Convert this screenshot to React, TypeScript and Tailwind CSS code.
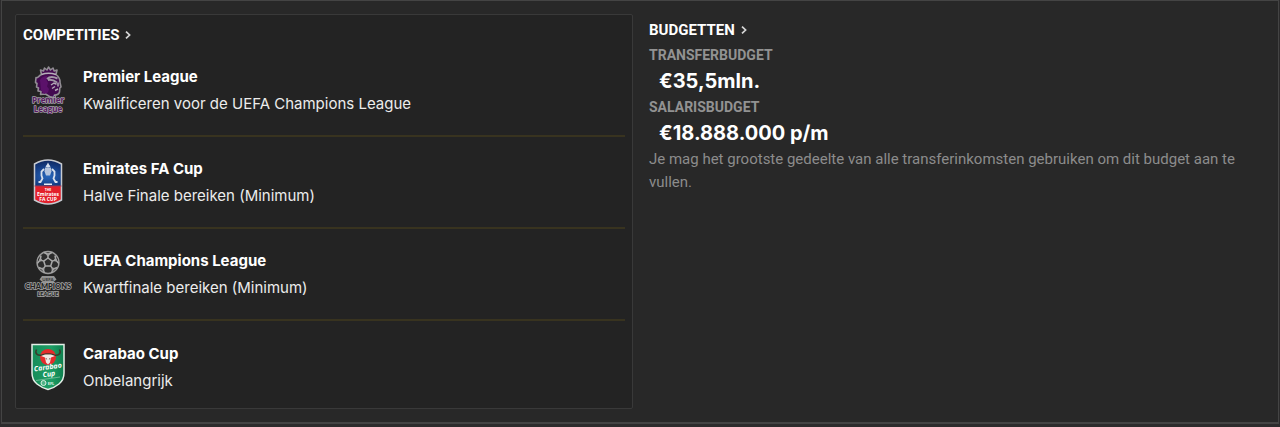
import type { ReactNode } from 'react';

function Chevron() {
  return (
    <svg className="h-2 w-1.5" viewBox="0 0 6 8" fill="none" stroke="#d6d6d6" strokeWidth="1.7" aria-hidden="true">
      <path d="M1 0.6 4.6 4 1 7.4" />
    </svg>
  );
}

function PremierLeagueLogo() {
  return (
    <svg className="size-12" viewBox="0 0 48 48" aria-hidden="true">
      <path
        fill="#430a50"
        stroke="#918d93"
        strokeWidth="1.600"
        strokeLinejoin="round"
        d="M17.500 8.500 16.500 4l3 1 1-3 2.500 2L24.500 1l2 3L29 2l1.200 3L33 4l-1 4.500c3 2.500 4.300 5 4 8l1 4.500-1.200 1-.3 4c-.5 2.500-2.500 3-5 3l1 3-6-1.500-4-2.500-5 .5.500-3-3-.5.500-3-2-1 .5-3.500-1.500-1 .5-5C13.500 12.500 14.500 10 17.500 8.500Z"
      />
      <path fill="#5b116a" d="M16 14c2-3 4-4 7-4l-.5 4 1.500 3-1 3.500 2 2.500-1 3.500-4 1.500-3-4Z" />
      <path d="M17.500 8.500c4-1.500 10-1.500 14.500 0" stroke="#b7afba" strokeWidth="1.500" fill="none" />
      <path d="M23 13c2-2 6-2.500 10.500-.5M24 14c3-.5 6 .3 9 2.500" stroke="#a197a6" strokeWidth="2" fill="none" />
      <path d="m27 19 3-2 2.500 1.200M34 16.500v4M28 22.500l3-2M31 24.500l3-1.500" stroke="#b3a9b7" strokeWidth="1.500" fill="none" />
      <g
        fontFamily="Open Sans, sans-serif"
        fontSize="8"
        fontWeight="700"
        textAnchor="middle"
        fill="#561b61"
        stroke="#aaa4ac"
        strokeWidth="1.400"
        paintOrder="stroke"
        strokeLinejoin="round"
      >
        <text x="24" y="37">Premier</text>
        <text x="24" y="45.500">League</text>
      </g>
    </svg>
  );
}

function FaCupLogo() {
  return (
    <svg className="size-12" viewBox="0 0 48 48" aria-hidden="true">
      <defs>
        <radialGradient id="fa-blue" cx="50%" cy="65%" r="70%">
          <stop offset="0" stopColor="#2868bd" />
          <stop offset="0.5" stopColor="#153d84" />
          <stop offset="1" stopColor="#0b1c4a" />
        </radialGradient>
        <clipPath id="fa-shape">
          <path d="M10.500 6Q24-2 37.500 6v36Q24 50 10.500 42Z" />
        </clipPath>
      </defs>
      <g clipPath="url(#fa-shape)">
        <rect width="48" height="48" fill="#e3202b" />
        <rect width="48" height="28" fill="url(#fa-blue)" />
      </g>
      <path d="M10.500 6Q24-2 37.500 6v36Q24 50 10.500 42Z" fill="none" stroke="#c7cbd1" strokeWidth="1.500" />
      <path d="M10.500 28h27" stroke="#9b3b57" strokeWidth="1" />
      <path d="M24 4.500 25 6.500l1.500 2-1.500 1h-2l-1.500-1L23 6.500Z" fill="#d6dfec" />
      <path d="M21 9.500h6l.5 4-1.500 4h-4l-1.500-4Z" fill="#b4c4dd" />
      <path d="m20 11-2.500 2.500v4l1 3-2 3.500h-2M28 11l2.500 2.500v4l-1 3 2 3.500h2" stroke="#d9e1ed" strokeWidth="1.800" fill="none" />
      <path d="M20 25.500h8v1.500h-8Z" fill="#e6edf6" />
      <g fontFamily="Open Sans, sans-serif" fontWeight="700" textAnchor="middle" fill="#fff">
        <text x="24" y="32.500" fontSize="3.500">THE</text>
        <text x="24" y="37.500" fontSize="5">Emirates</text>
        <text x="24" y="43.200" fontSize="5">FA CUP</text>
      </g>
    </svg>
  );
}

function ChampionsLeagueLogo() {
  return (
    <svg className="size-12" viewBox="0 0 48 48" aria-hidden="true">
      <circle cx="24" cy="12.500" r="11" fill="#2c2c2c" stroke="#9a9a9a" strokeWidth="1.300" />
      <g fill="none" stroke="#a8a8a8" strokeWidth="1.500" strokeLinejoin="round">
        <path d="m24 8 4.300 3.100-1.600 5h-5.400l-1.600-5Z" />
        <path d="M24 8V4.500M28.300 11.100l3.500-1.200M26.700 16.100l2.300 3M21.300 16.100l-2.300 3M19.700 11.100l-3.500-1.200" />
        <path d="m24 4.500 4-2M24 4.500l-4-2M31.800 9.900 31 5.500M31.800 9.900l3 3.600M29 19.100l4-1.600M29 19.100l-1.500 3.900M19 19.100l-4-1.600M19 19.100l1.500 3.900M16.200 9.900l.8-4.400M16.200 9.900l-3 3.600" />
      </g>
      <g fill="#a0a0a0">
        <circle cx="24" cy="4.500" r="1.500" />
        <circle cx="31.500" cy="9.900" r="1.500" />
        <circle cx="29" cy="19" r="1.500" />
        <circle cx="19" cy="19" r="1.500" />
        <circle cx="16.500" cy="9.900" r="1.500" />
      </g>
      <path d="M15.500 29.500 18 26h12l2.500 3.500-3 2.500 1 2h-13l1-2Z" fill="#929292" />
      <text x="24" y="31" fontSize="4.500" fontFamily="Lato, sans-serif" fontWeight="700" textAnchor="middle" fill="#353535">UEFA</text>
      <g fontFamily="Lato, sans-serif" fontWeight="900" textAnchor="middle" fill="#222222" stroke="#a2a2a2" strokeWidth="1.500" paintOrder="stroke">
        <text x="24" y="39" fontSize="7.500">CHAMPIONS</text>
        <text x="24" y="46" fontSize="5.500">LEAGUE</text>
      </g>
    </svg>
  );
}

function CarabaoCupLogo() {
  return (
    <svg className="size-12" viewBox="0 0 48 48" aria-hidden="true">
      <defs>
        <linearGradient id="carabao-green" x1="0" x2="1">
          <stop offset="0" stopColor="#168c59" />
          <stop offset="0.6" stopColor="#1d9e65" />
          <stop offset="1" stopColor="#0d7e4d" />
        </linearGradient>
      </defs>
      <path d="M8 1.500h32V30q0 7-5 11-5 4-11 5.500Q18 45 13 41q-5-4-5-11Z" fill="url(#carabao-green)" stroke="#e3eee7" strokeWidth="1.500" />
      <circle cx="24" cy="14" r="8" fill="#e52b2c" />
      <path d="M12.500 6.500c-2 4 1 6.500 5.500 5.500l4-1h4l4 1c4.500 1 7.500-1.500 5.500-5.500" fill="none" stroke="#3b3b2c" strokeWidth="1.500" />
      <path d="m17 13 4-1.500h6l4 1.500-4 1.500-1 5-2 2-2-2-1-5Z" fill="#eee9e4" />
      <path d="m22 15 .7 1.500M26 15l-.7 1.500" stroke="#684443" strokeWidth="0.800" />
      <g transform="rotate(-8 24 25)" fontFamily="Open Sans, sans-serif" fontSize="7" fontWeight="700" fontStyle="italic" textAnchor="middle" fill="#fff">
        <text x="24" y="26.500">Carabao</text>
        <text x="24" y="33.500">Cup</text>
      </g>
      <path d="m12 37.500 24-3.500" stroke="#8cc9a9" strokeWidth="0.700" />
      <circle cx="19.500" cy="40" r="2.500" fill="#4fb386" stroke="#d9eee2" strokeWidth="1" />
      <text x="27" y="41.500" fontSize="4" fontFamily="Open Sans, sans-serif" fontWeight="700" textAnchor="middle" fill="#e2f1e8">EFL</text>
    </svg>
  );
}

type Competition = { name: string; goal: string; logo: ReactNode };

const competitions: Competition[] = [
  { name: 'Premier League', goal: 'Kwalificeren voor de UEFA Champions League', logo: <PremierLeagueLogo /> },
  { name: 'Emirates FA Cup', goal: 'Halve Finale bereiken (Minimum)', logo: <FaCupLogo /> },
  { name: 'UEFA Champions League', goal: 'Kwartfinale bereiken (Minimum)', logo: <ChampionsLeagueLogo /> },
  { name: 'Carabao Cup', goal: 'Onbelangrijk', logo: <CarabaoCupLogo /> },
];

function PanelLink({ children }: { children: ReactNode }) {
  return (
    <h2 className="text-[15px] leading-5 font-bold text-white">
      <a href="#" className="inline-flex items-center gap-1.5">
        {children}
        <Chevron />
      </a>
    </h2>
  );
}

export default function App() {
  return (
    <div className="bg-[#2c2b2c] pb-1 font-['Roboto','Liberation_Sans',sans-serif]">
      <main className="mx-px grid grid-cols-[618fr_616fr] gap-4 border border-b-2 border-[#444444] bg-[#282828] p-[13px]">
        <section className="rounded-xs border border-[#393939] bg-[#232323] px-[7px] pt-2.5">
          <PanelLink>COMPETITIES</PanelLink>
          <ul>
            {competitions.map((item) => (
              <li
                key={item.name}
                className="flex items-center gap-[11px] border-b-2 border-[#38331f] py-[18px] pl-px last:border-0 last:pt-[19px] last:pb-3.5"
              >
                {item.logo}
                <div className="font-['Inter','Liberation_Sans',sans-serif] text-[15px] leading-[27px]">
                  <h3 className="font-bold text-white">{item.name}</h3>
                  <p className="text-[#ececec]">{item.goal}</p>
                </div>
              </li>
            ))}
          </ul>
        </section>
        <section className="pt-1.5">
          <PanelLink>BUDGETTEN</PanelLink>
          <dl>
            <dt className="pt-1 text-sm leading-[22px] font-bold text-[#929292]">TRANSFERBUDGET</dt>
            <dd className="pt-1 pl-2.5 font-['Inter','Liberation_Sans',sans-serif] text-xl leading-[22px] font-bold text-white">€35,5mln.</dd>
            <dt className="pt-1 text-sm leading-[22px] font-bold text-[#929292]">SALARISBUDGET</dt>
            <dd className="pt-1 pl-2.5 font-['Inter','Liberation_Sans',sans-serif] text-xl leading-[22px] font-bold text-white">€18.888.000 p/m</dd>
          </dl>
          <p className="pt-1 text-[15px] leading-[23px] text-[#8c8c8c]">
            Je mag het grootste gedeelte van alle transferinkomsten gebruiken om dit budget aan te vullen.
          </p>
        </section>
      </main>
    </div>
  );
}
